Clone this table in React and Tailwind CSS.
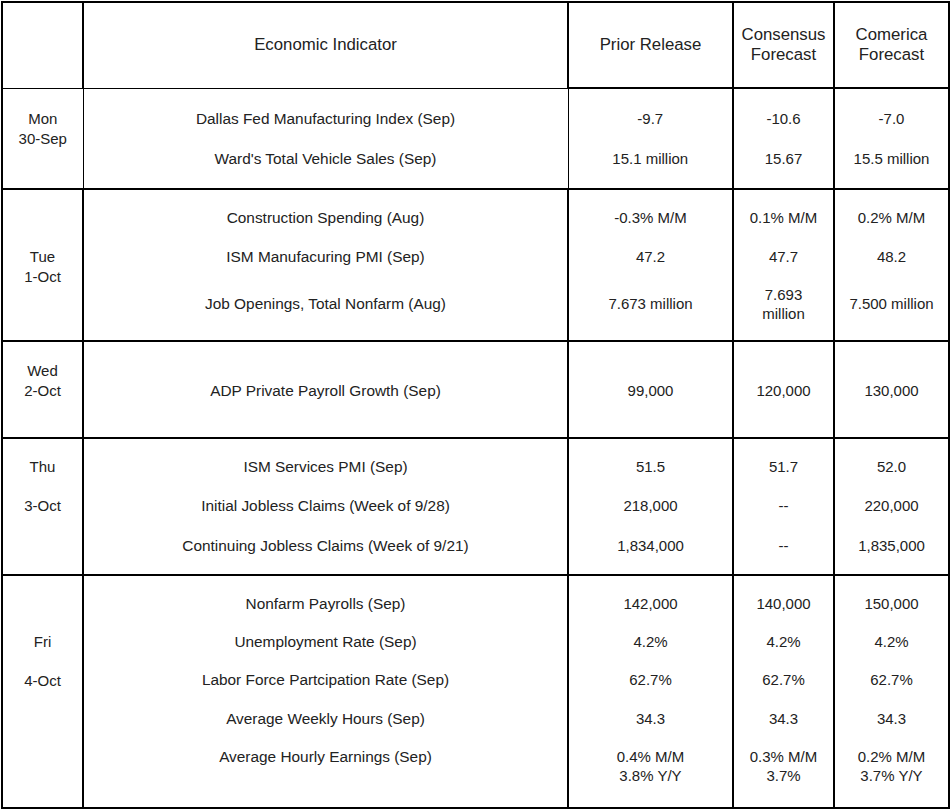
import React from "react";
import clsx from "clsx";

// each group = one day, rows = indicators released that day
const groups = [
    {
        day: ["Mon", "30-Sep"],
        dayPad: "pt-[20px]",
        dayGap: "",
        thin: true,
        rows: [
            { ind: "Dallas Fed Manufacturing Index (Sep)", prior: "-9.7", cons: "-10.6", com: "-7.0", pad: "pt-[20px] pb-[10px]" },
            { ind: "Ward's Total Vehicle Sales (Sep)", prior: "15.1 million", cons: "15.67", com: "15.5 million", pad: "pt-[10px] pb-[19px]" },
        ],
    },
    {
        day: ["Tue", "1-Oct"],
        dayPad: "pt-[57px]",
        dayGap: "",
        rows: [
            { ind: "Construction Spending (Aug)", prior: "-0.3% M/M", cons: "0.1% M/M", com: "0.2% M/M", pad: "pt-[18px] pb-[9px]" },
            { ind: "ISM Manufacuring PMI (Sep)", prior: "47.2", cons: "47.7", com: "48.2", pad: "pt-[10px] pb-[9px]" },
            { ind: "Job Openings, Total Nonfarm (Aug)", prior: "7.673 million", cons: "7.693\nmillion", com: "7.500 million", pad: "pt-[9px] pb-[17px]" },
        ],
    },
    {
        day: ["Wed", "2-Oct"],
        dayPad: "pt-[19px]",
        dayGap: "",
        rows: [
            { ind: "ADP Private Payroll Growth (Sep)", prior: "99,000", cons: "120,000", com: "130,000", pad: "pt-[39px] pb-[36px]" },
        ],
    },
    {
        day: ["Thu", "3-Oct"],
        dayPad: "pt-[18px]",
        dayGap: "mt-[19px]",
        rows: [
            { ind: "ISM Services PMI (Sep)", prior: "51.5", cons: "51.7", com: "52.0", pad: "pt-[18px] pb-[10px]" },
            { ind: "Initial Jobless Claims (Week of 9/28)", prior: "218,000", cons: "--", com: "220,000", pad: "pt-[9px] pb-[10px]" },
            { ind: "Continuing Jobless Claims (Week of 9/21)", prior: "1,834,000", cons: "--", com: "1,835,000", pad: "pt-[10px] pb-[18px]" },
        ],
    },
    {
        day: ["Fri", "4-Oct"],
        dayPad: "pt-[56px]",
        dayGap: "mt-[19px]",
        rows: [
            { ind: "Nonfarm Payrolls (Sep)", prior: "142,000", cons: "140,000", com: "150,000", pad: "pt-[18px] pb-[9px]" },
            { ind: "Unemployment Rate (Sep)", prior: "4.2%", cons: "4.2%", com: "4.2%", pad: "pt-[9px] pb-[9px]" },
            { ind: "Labor Force Partcipation Rate (Sep)", prior: "62.7%", cons: "62.7%", com: "62.7%", pad: "pt-[9px] pb-[9px]" },
            { ind: "Average Weekly Hours (Sep)", prior: "34.3", cons: "34.3", com: "34.3", pad: "pt-[10px] pb-[9px]" },
            { ind: "Average Hourly Earnings (Sep)", prior: "0.4% M/M\n3.8% Y/Y", cons: "0.3% M/M\n3.7%", com: "0.2% M/M\n3.7% Y/Y", pad: "pt-[9px] pb-[22px]", top: true },
        ],
    },
];

const Td = ({ className, children, ...rest }) => {
    const multi = typeof children === "string" && children.includes("\n");
    return (
        <td
            className={clsx(
                "border-black text-center whitespace-pre-line p-0",
                multi ? "leading-[19px]" : "leading-5",
                className
            )}
            {...rest}
        >
            {children}
        </td>
    );
};

const Th = ({ className, children }) => (
    <th className={clsx("border-black border-2 text-center font-normal whitespace-pre-line p-0 text-[16.8px] leading-5", className)}>
        {children}
    </th>
);

const App = () => {
    return (
        <div className="bg-white w-[951px] h-[812px] pt-[1px] pl-[1px] font-['Liberation_Sans',Arial,sans-serif] text-[15px] text-[#222]">
            <table className="border-collapse table-fixed w-[947px]">
                <colgroup>
                    <col className="w-[81px]" />
                    <col className="w-[485px]" />
                    <col className="w-[165px]" />
                    <col className="w-[101px]" />
                    <col className="w-[115px]" />
                </colgroup>
                <thead>
                    <tr className="h-[86px]">
                        <Th className="border-b"></Th>
                        <Th className="border-b">Economic Indicator</Th>
                        <Th>Prior Release</Th>
                        <Th>{"Consensus\nForecast"}</Th>
                        <Th>{"Comerica\nForecast"}</Th>
                    </tr>
                </thead>
                <tbody>
                    {groups.map((g, gi) =>
                        g.rows.map((r, ri) => {
                            const first = ri === 0;
                            const top = first ? (g.thin ? "border-t" : "border-t-2") : "";
                            const topWide = first ? "border-t-2" : "";
                            const bottom = gi === groups.length - 1 && ri === g.rows.length - 1 ? "border-b-2" : "";
                            const mid = g.thin ? "border-r" : "border-r-2";
                            const valign = r.top ? "align-top" : "align-middle";
                            return (
                                <tr key={gi + "-" + ri}>
                                    {first && (
                                        <Td rowSpan={g.rows.length} className={clsx("align-top border-l-2 border-b-2 leading-5", top, mid, g.dayPad)}>
                                            <div>{g.day[0]}</div>
                                            <div className={g.dayGap}>{g.day[1]}</div>
                                        </Td>
                                    )}
                                    <Td className={clsx("text-[15.4px]", valign, top, mid, bottom, r.pad)}>{r.ind}</Td>
                                    <Td className={clsx("border-r-2", valign, topWide, bottom, r.pad)}>{r.prior}</Td>
                                    <Td className={clsx("border-r-2", valign, topWide, bottom, r.pad)}>{r.cons}</Td>
                                    <Td className={clsx("border-r-2", valign, topWide, bottom, r.pad)}>{r.com}</Td>
                                </tr>
                            );
                        })
                    )}
                </tbody>
            </table>
        </div>
    );
};

export default App;
